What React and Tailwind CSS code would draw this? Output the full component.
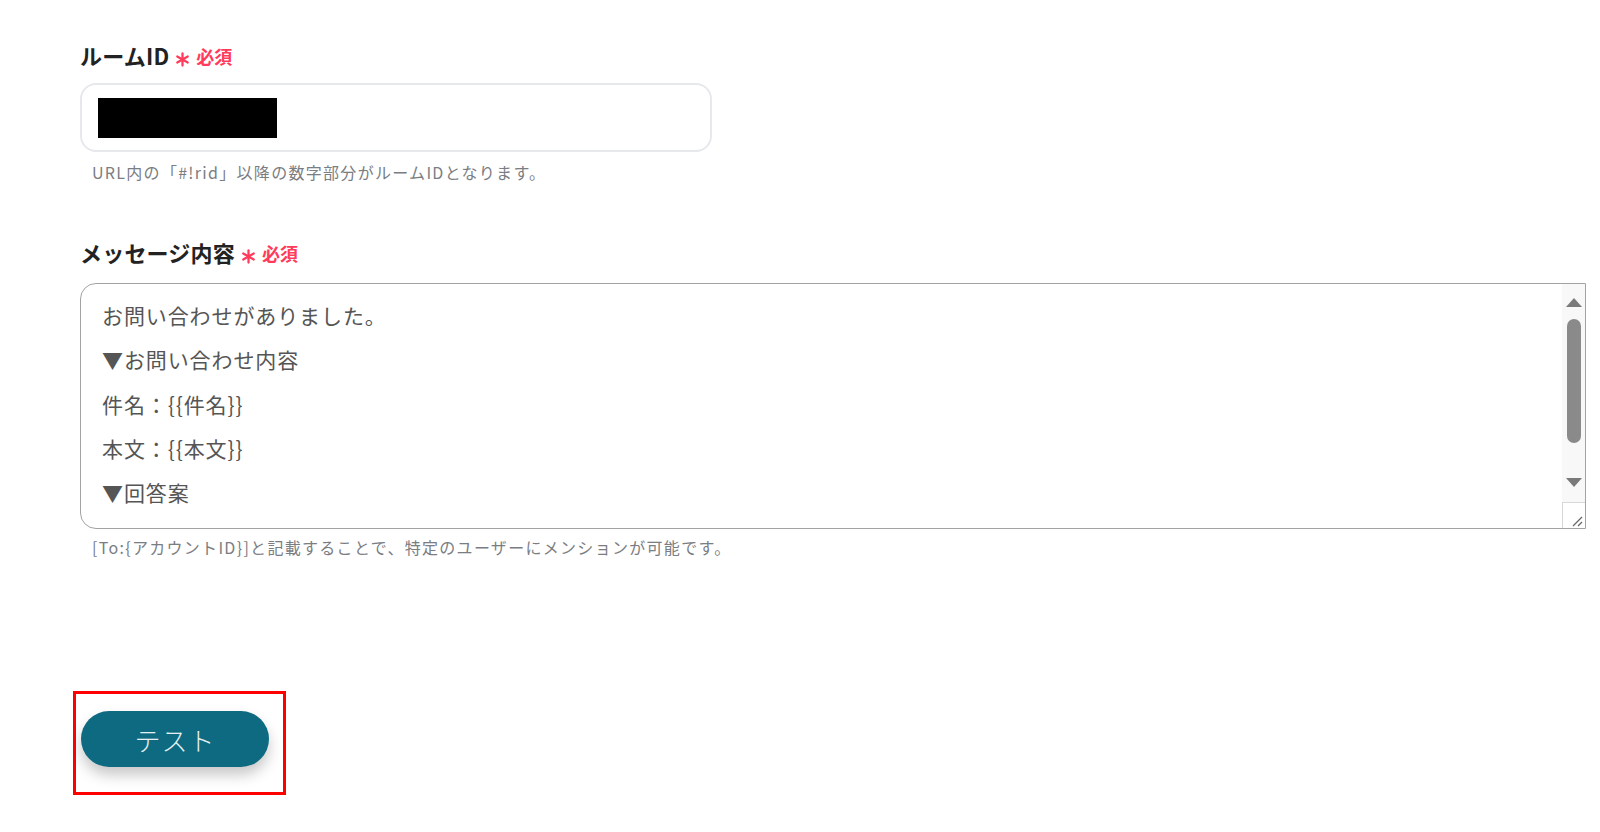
import React from "react";

const jp = { fontFamily: '"Noto Sans CJK JP", "Noto Sans", sans-serif' };

const lines = [
  "お問い合わせがありました。",
  "▼お問い合わせ内容",
  "件名：{{件名}}",
  "本文：{{本文}}",
  "▼回答案",
];

const Asterisk = () => (
  <svg width="15" height="15" viewBox="0 0 16 16" className="relative top-[4px]">
    <g stroke="#ff3b5c" strokeWidth="2.4" strokeLinecap="round">
      <line x1="8" y1="1.5" x2="8" y2="14.5" />
      <line x1="2.4" y1="4.8" x2="13.6" y2="11.2" />
      <line x1="2.4" y1="11.2" x2="13.6" y2="4.8" />
    </g>
  </svg>
);

const FieldLabel = ({ children }) => (
  <div className="flex items-center h-[28px]">
    <span className="text-[22px] font-bold text-[#222] leading-[28px] tracking-[0.2px]">{children}</span>
    <span className="ml-[6px] flex items-center">
      <Asterisk />
    </span>
    <span className="ml-[6px] text-[18px] font-bold text-[#ff3b5c] leading-[24px] relative top-[1px]">必須</span>
  </div>
);

const Hint = ({ children, className = "" }) => (
  <p className={"pl-[12px] text-[16px] text-[#7a7d82] tracking-[1.3px] leading-[24px] " + className}>{children}</p>
);

export default function App() {
  return (
    <div className="w-[1600px] min-h-[832px] bg-white pl-[80px] pt-[41px]" style={jp}>
      {/* ルームID */}
      <FieldLabel>ルームID</FieldLabel>
      <div className="mt-[14px] w-[632px] h-[69px] rounded-[16px] border-2 border-[#e6e8ec] flex items-center pl-[16px]">
        <div className="w-[179px] h-[40px] bg-black" />
      </div>
      <Hint className="mt-[8px]">URL内の「#!rid」以降の数字部分がルームIDとなります。</Hint>

      {/* メッセージ内容 */}
      <div className="mt-[54px]">
        <FieldLabel>メッセージ内容</FieldLabel>
      </div>
      <div className="relative mt-[17px] w-[1506px] h-[246px] rounded-l-[16px] border border-[#a3a3a3] overflow-hidden bg-white">
        <div className="pl-[21px] pt-[9px] text-[21px] leading-[44.3px] text-[#555] tracking-[0.9px]">
          {lines.map((l, i) => (
            <div key={i}>{l}</div>
          ))}
        </div>

        {/* scrollbar */}
        <div className="absolute right-0 top-0 bottom-0 w-[23px] bg-[#f8f8f8] flex flex-col items-center">
          <div className="mt-[14px] w-0 h-0 border-l-[8px] border-r-[8px] border-b-[9px] border-l-transparent border-r-transparent border-b-[#7a7a7a]" />
          <div className="mt-[12px] w-[14px] h-[124px] rounded-full bg-[#8a8a8a]" />
          <div className="mt-[35px] w-0 h-0 border-l-[8px] border-r-[8px] border-t-[9px] border-l-transparent border-r-transparent border-t-[#7a7a7a]" />
          <div className="mt-auto w-[23px] h-[26px] border-t border-l border-[#d8d8d8] bg-white relative">
            <svg width="12" height="12" viewBox="0 0 12 12" className="absolute right-[2px] bottom-[1px]">
              <line x1="2" y1="11" x2="11" y2="2" stroke="#666" strokeWidth="1.2" />
              <line x1="7" y1="11" x2="11" y2="7" stroke="#666" strokeWidth="1.2" />
            </svg>
          </div>
        </div>
      </div>
      <Hint className="mt-[6px]">
        [To:{"{"}アカウントID{"}"}]と記載することで、特定のユーザーにメンションが可能です。
      </Hint>

      {/* テスト button */}
      <div className="mt-[132px] -ml-[7px] w-[213px] h-[104px] border-[3px] border-[#ff0000] pl-[5px] pt-[17px]">
        <button className="w-[188px] h-[56px] rounded-full bg-[#0e6a80] text-[26px] text-[#e6f0f2] font-light tracking-[1px] shadow-[0_8px_14px_rgba(0,0,0,0.22)]">
          テスト
        </button>
      </div>
    </div>
  );
}
